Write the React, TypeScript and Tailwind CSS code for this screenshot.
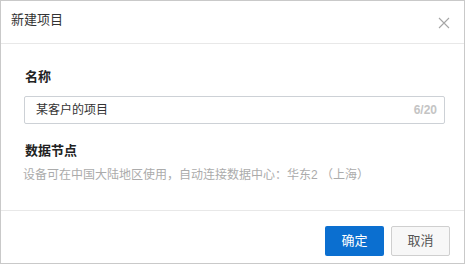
import React from "react";

export default function App() {
  const font = { fontFamily: '"Liberation Sans", "Noto Sans CJK SC", sans-serif' };
  return (
    <div
      className="w-[465px] h-[264px] border border-[#c9c9c9] bg-white flex flex-col box-border"
      style={font}
    >
      <div className="h-[43px] shrink-0 border-b border-[#e8e8e8] flex items-start justify-between pl-[10px] pr-[14px] pt-[11px]">
        <span className="text-[13px] leading-[16px] text-[#333]">新建项目</span>
        <button className="mt-[5px] w-[12px] h-[12px] flex items-center justify-center">
          <svg width="12" height="12" viewBox="0 0 12 12" fill="none">
            <path d="M1 1L11 11M11 1L1 11" stroke="#a6a6a6" strokeWidth="1.1" />
          </svg>
        </button>
      </div>
      <div className="flex-1 flex flex-col pl-[23px] pr-[19px] pt-[24px]">
        <div className="text-[13px] leading-[18px] font-bold text-[#222] pl-[1px]">名称</div>
        <div className="mt-[10px] h-[28px] border border-[#cdd1d6] rounded-[2px] flex items-center justify-between pl-[11px] pr-[7px]">
          <span className="text-[12px] text-[#333]">某客户的项目</span>
          <span className="text-[12px] font-bold text-[#c4c4c4]">6/20</span>
        </div>
        <div className="mt-[18px] text-[13px] leading-[18px] font-bold text-[#222] pl-[1px]">数据节点</div>
        <div className="mt-[7px] text-[12px] leading-[16px] text-[#ababab] -ml-[1px]">
          设备可在中国大陆地区使用，自动连接数据中心：华东2 （上海）
        </div>
      </div>
      <div className="h-[53px] shrink-0 border-t border-[#e8e8e8] flex items-start justify-end gap-[7px] pt-[15px] pr-[14px]">
        <button className="w-[59px] h-[30px] rounded-[2px] bg-[#0b6fd0] text-white text-[13px]">确定</button>
        <button className="w-[59px] h-[30px] rounded-[2px] bg-[#f7f7f7] border border-[#cfcfcf] text-[#555] text-[13px]">取消</button>
      </div>
    </div>
  );
}
